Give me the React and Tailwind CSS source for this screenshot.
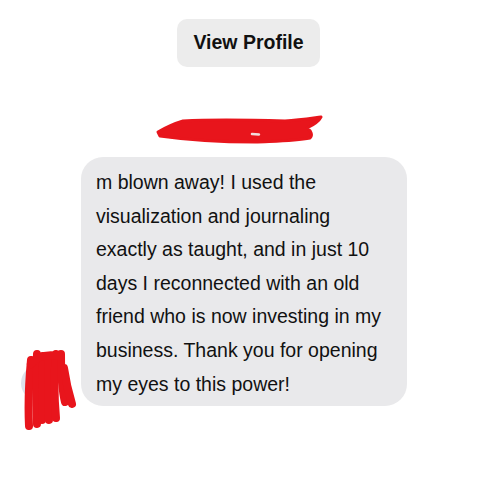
import React from 'react';

const lines = [
    'm blown away! I used the',
    'visualization and journaling',
    'exactly as taught, and in just 10',
    'days I reconnected with an old',
    'friend who is now investing in my',
    'business. Thank you for opening',
    'my eyes to this power!',
];

const NameScribble = () => (
    <svg width="170" height="30" viewBox="0 0 170 30" className="absolute left-0 top-0">
        <path
            d="M3 18 C10 14 18 10 28 7 C60 5 100 6 130 7 C145 6 158 4 166 3 C164 7 158 11 152 14 C156 17 158 21 155 24 C140 27 120 27 100 28 C70 28 40 27 5 22 Z"
            fill="#e8151c"
            stroke="#e8151c"
            strokeWidth="3"
            strokeLinejoin="round"
        />
        <path d="M97 20 L104 20.5" stroke="#f2dcdc" strokeWidth="2.5" strokeLinecap="round" />
    </svg>
);

const AvatarScribble = () => (
    <svg width="60" height="84" viewBox="0 0 60 84" className="absolute left-0 top-0">
        <circle cx="20" cy="37" r="18" fill="#dde2ec" />
        <g stroke="#e8151c" strokeWidth="8" fill="none" strokeLinecap="round">
            <path d="M12 14 C10 35 9 60 10 80" />
            <path d="M18 8 C17 30 17 55 18 78" />
            <path d="M24 10 C23 30 23 52 23 74" />
            <path d="M30 12 C29 30 29 52 30 74" />
            <path d="M37 8 C35 28 35 50 37 72" />
            <path d="M42 8 C42 28 43 44 46 56" />
            <path d="M45 22 C47 36 50 48 53 58" />
            <path d="M12 18 C18 10 28 8 40 10" />
        </g>
    </svg>
);

export default function App() {
    return (
        <div className="w-[500px] h-[500px] bg-white flex flex-col items-center pt-[19px] font-['Liberation_Sans',Arial,sans-serif]">
            <button className="w-[143px] h-[48px] rounded-[10px] bg-[#ececec] text-[#111] font-bold text-[19.5px] ml-[-3px]">
                View Profile
            </button>

            <div className="relative mt-[47px] w-[170px] h-[28px] self-start ml-[155px]">
                <span className="absolute left-[17px] top-[10px] text-[12px] leading-none text-[#999]">o</span>
                <span className="absolute left-[142px] top-[12px] text-[11px] leading-none text-[#999]">x</span>
                <NameScribble />
            </div>

            <div className="w-full flex items-end pl-[19px] mt-[15px]">
                <div className="relative w-[60px] h-[84px] mb-[-24px]">
                    <AvatarScribble />
                </div>
                <div className="ml-[2px] w-[326px] rounded-[22px] bg-[#e9e9eb] pl-[15px] pr-[8px] pt-[9px] pb-[5px] text-[19.5px] leading-[33.6px] text-[#111]">
                    {lines.map((l) => (
                        <div key={l} className="whitespace-nowrap">{l}</div>
                    ))}
                </div>
            </div>
        </div>
    );
}
